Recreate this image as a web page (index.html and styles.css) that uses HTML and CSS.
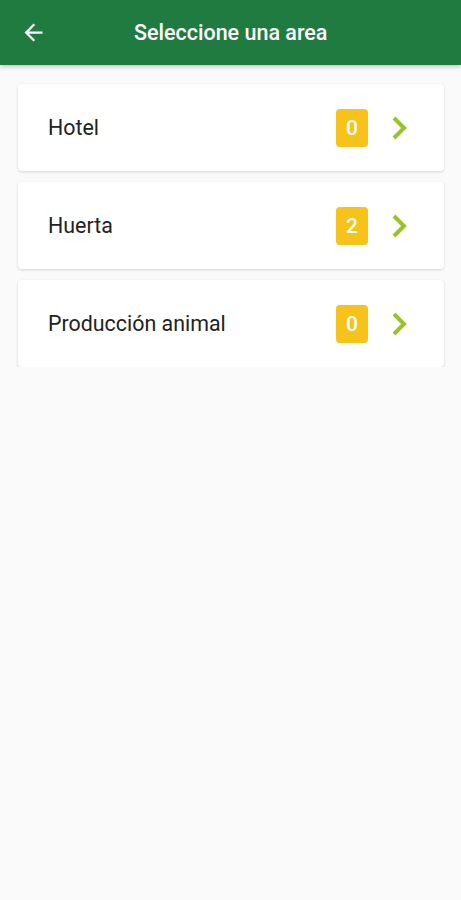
FILE: index.html
```html
<!doctype html>
<html>
<head>
    <title>Seleccione una area</title>
    <meta charset="utf-8">
    <link rel="stylesheet" href="styles.css">
</head>
<body>
    <!-- Barra superior -->
    <header class="barra">
        <button class="btn-atras" aria-label="Atrás">
            <svg width="27" height="27" viewBox="0 0 24 24">
                <path d="M20 11H7.83l5.59-5.59L12 4l-8 8 8 8 1.41-1.41L7.83 13H20v-2z" fill="white"/>
            </svg>
        </button>
        <h1 class="titulo">Seleccione una area</h1>
    </header>

    <!-- Lista de areas -->
    <main class="lista">
        <div class="tarjeta">
            <span class="nombre">Hotel</span>
            <span class="contador">0</span>
            <svg class="flecha" width="20" height="26" viewBox="0 0 20 26">
                <path d="M4 3l10 10-10 10" fill="none" stroke="#9cc12b" stroke-width="4"/>
            </svg>
        </div>
        <div class="tarjeta">
            <span class="nombre">Huerta</span>
            <span class="contador">2</span>
            <svg class="flecha" width="20" height="26" viewBox="0 0 20 26">
                <path d="M4 3l10 10-10 10" fill="none" stroke="#9cc12b" stroke-width="4"/>
            </svg>
        </div>
        <div class="tarjeta">
            <span class="nombre">Producción animal</span>
            <span class="contador">0</span>
            <svg class="flecha" width="20" height="26" viewBox="0 0 20 26">
                <path d="M4 3l10 10-10 10" fill="none" stroke="#9cc12b" stroke-width="4"/>
            </svg>
        </div>
    </main>
</body>
</html>
```

FILE: styles.css
```css
body {
    margin: 0;
    background-color: #fafafa;
    font-family: Roboto, "Noto Sans", sans-serif;
}
.barra {
    height: 65px;
    background-color: #1f7b3f;
    display: flex;
    align-items: center;
    box-shadow: 0px 2px 4px rgba(0, 0, 0, 0.2);
}
.btn-atras {
    background: none;
    border: none;
    padding: 0;
    margin-left: 20px;
    width: 27px;
    height: 27px;
    display: flex;
    align-items: center;
    justify-content: center;
}
.titulo {
    flex: 1;
    margin: 0 0 0 87px;
    color: white;
    font-size: 21.5px;
    font-weight: 500;
}
.lista {
    padding: 19px 17px 0 18px;
    display: flex;
    flex-direction: column;
    gap: 11px;
}
.tarjeta {
    height: 87px;
    background-color: white;
    border-radius: 4px;
    box-shadow: 0px 1px 3px rgba(0, 0, 0, 0.15);
    display: flex;
    align-items: center;
    padding: 0 34px 0 30px;
}
.nombre {
    flex: 1;
    font-size: 21.4px;
    color: #222;
}
.contador {
    width: 32px;
    height: 38px;
    border-radius: 4px;
    background-color: #f7c31a;
    color: white;
    font-size: 21px;
    font-weight: 500;
    display: flex;
    align-items: center;
    justify-content: center;
    margin-right: 22px;
}
.flecha {
    display: block;
}
```
